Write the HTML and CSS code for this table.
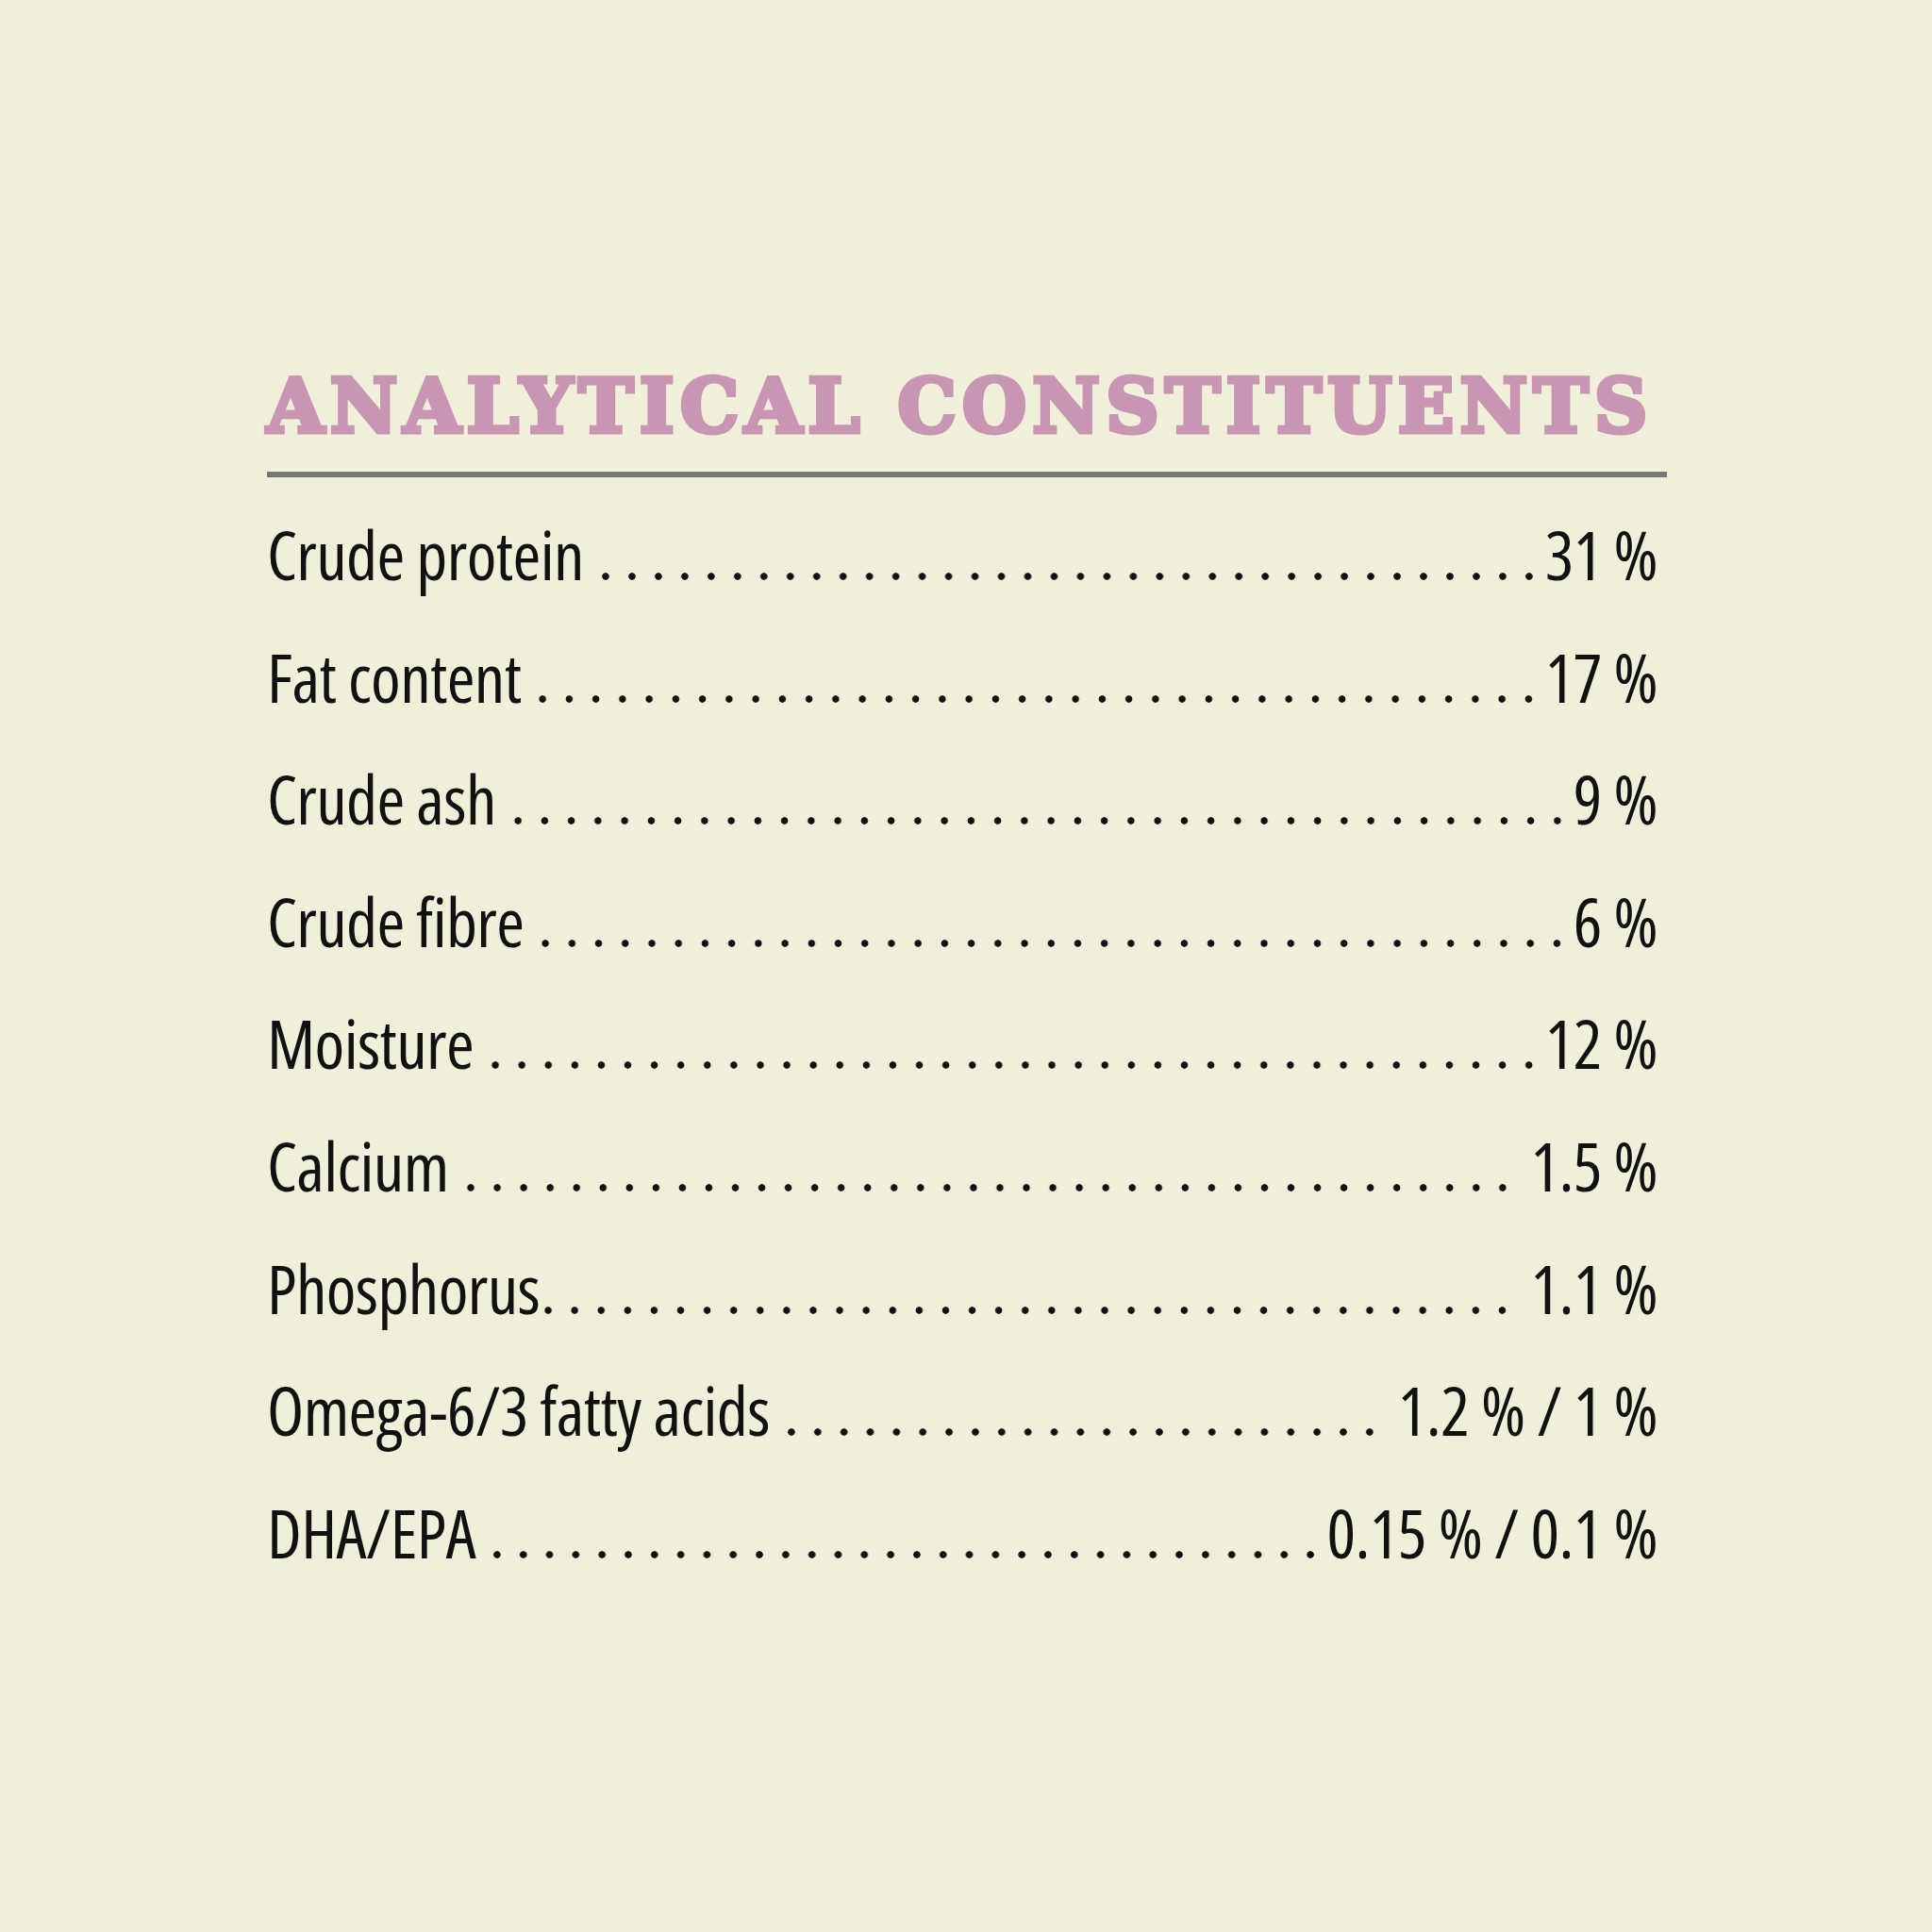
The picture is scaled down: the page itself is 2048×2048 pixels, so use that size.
FILE: index.html
```html
<!DOCTYPE html>
<html lang="en">
<head>
<meta charset="utf-8">
<title>Analytical constituents</title>
<link rel="stylesheet" href="styles.css">
</head>
<body>
<main class="page">
  <section class="panel">
    <h1 class="title">ANALYTICAL CONSTITUENTS</h1>
    <div class="rule"></div>
    <ul class="list">
      <li class="row"><span class="label">Crude protein</span><span class="leader"></span><span class="value">31 %</span></li>
      <li class="row"><span class="label">Fat content</span><span class="leader"></span><span class="value">17 %</span></li>
      <li class="row"><span class="label">Crude ash</span><span class="leader"></span><span class="value">9 %</span></li>
      <li class="row"><span class="label">Crude fibre</span><span class="leader"></span><span class="value">6 %</span></li>
      <li class="row"><span class="label">Moisture</span><span class="leader"></span><span class="value">12 %</span></li>
      <li class="row"><span class="label">Calcium</span><span class="leader"></span><span class="value">&nbsp;1.5 %</span></li>
      <li class="row"><span class="label">Phosphorus</span><span class="leader leader-tight"></span><span class="value">&nbsp;1.1 %</span></li>
      <li class="row"><span class="label">Omega-6/3 fatty acids</span><span class="leader"></span><span class="value">&nbsp;1.2 % / 1 %</span></li>
      <li class="row"><span class="label">DHA/EPA</span><span class="leader"></span><span class="value">0.15 % / 0.1 %</span></li>
    </ul>
  </section>
</main>
</body>
</html>
```
FILE: styles.css
```css
html, body {
  margin: 0;
  padding: 0;
  background: #f0f0da;
}

.page {
  padding: 392px 0 0 283px;
}

.panel {
  width: 1484px;
}

.title {
  margin: 0;
  font-family: "DejaVu Serif", serif;
  font-weight: bold;
  font-size: 78px;
  line-height: 78px;
  letter-spacing: 6.5px;
  color: #c896b2;
  -webkit-text-stroke: 5px #c896b2;
  white-space: nowrap;
}

.rule {
  margin-top: 30px;
  height: 6px;
  background: #777777;
}

.list {
  list-style: none;
  margin: 17px 0 0;
  padding: 0;
}

.row {
  display: flex;
  align-items: baseline;
  height: 129.6px;
  font-family: "Open Sans", sans-serif;
  font-stretch: 75%;
  font-weight: 400;
  font-size: 72px;
  letter-spacing: -0.6px;
  line-height: 129.6px;
  color: #111111;
}

.label {
  white-space: nowrap;
}

.leader {
  flex: 1;
  height: 8px;
  margin: 0 3px 0 9px;
  background-image: radial-gradient(circle, #111111 3.4px, rgba(17,17,17,0) 4.1px);
  background-size: 28px 8px;
  background-repeat: round no-repeat;
}

.leader-tight {
  margin-left: -5px;
}

.value {
  padding-right: 10px;
  white-space: nowrap;
}
```
